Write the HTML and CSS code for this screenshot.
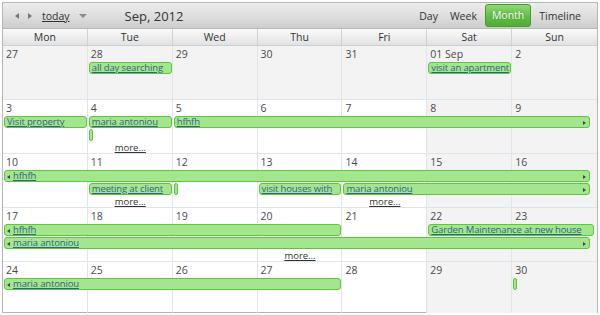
FILE: index.html
```html
<!DOCTYPE html>
<html lang="en">
<head>
  <meta charset="UTF-8">
  <title>Scheduler - Month</title>
  <link rel="stylesheet" href="styles.css">
</head>
<body>
  <div class="scheduler">
    <div class="toolbar">
      <div class="nav">
        <span class="arrow prev"></span>
        <span class="arrow next"></span>
        <a class="today" href="#">today</a>
        <span class="drop"></span>
        <span class="title">Sep, 2012</span>
      </div>
      <div class="views">
        <span class="view">Day</span>
        <span class="view">Week</span>
        <span class="view active">Month</span>
        <span class="view">Timeline</span>
      </div>
    </div>

    <div class="dayheads">
      <div>Mon</div><div>Tue</div><div>Wed</div><div>Thu</div><div>Fri</div><div>Sat</div><div>Sun</div>
    </div>

    <div class="weeks">
      <!-- week 1 -->
      <div class="week">
        <div class="day off">27</div>
        <div class="day off">28</div>
        <div class="day off">29</div>
        <div class="day off">30</div>
        <div class="day off">31</div>
        <div class="day off">01 Sep</div>
        <div class="day off">2</div>
        <a class="event r1 c2">all day searching</a>
        <a class="event r1 c6">visit an apartment</a>
      </div>

      <!-- week 2 -->
      <div class="week">
        <div class="day">3</div>
        <div class="day">4</div>
        <div class="day">5</div>
        <div class="day">6</div>
        <div class="day">7</div>
        <div class="day off">8</div>
        <div class="day off">9</div>
        <a class="event r1 c1">Visit property</a>
        <a class="event r1 c2">maria antoniou</a>
        <a class="event r1 c3 w5 to-next">hfhfh</a>
        <a class="event stub r2 c2"></a>
        <a class="more c2">more...</a>
      </div>

      <!-- week 3 -->
      <div class="week">
        <div class="day">10</div>
        <div class="day">11</div>
        <div class="day">12</div>
        <div class="day">13</div>
        <div class="day">14</div>
        <div class="day off">15</div>
        <div class="day off">16</div>
        <a class="event r1 c1 w7 from-prev to-next">hfhfh</a>
        <a class="event r2 c2">meeting at client</a>
        <a class="event stub r2 c3"></a>
        <a class="event r2 c4">visit houses with</a>
        <a class="event r2 c5 w3 to-next">maria antoniou</a>
        <a class="more c2">more...</a>
        <a class="more c5">more...</a>
      </div>

      <!-- week 4 -->
      <div class="week">
        <div class="day">17</div>
        <div class="day">18</div>
        <div class="day">19</div>
        <div class="day">20</div>
        <div class="day">21</div>
        <div class="day off">22</div>
        <div class="day off">23</div>
        <a class="event r1 c1 w4 from-prev">hfhfh</a>
        <a class="event r1 c6 w2 wide">Garden Maintenance at new house</a>
        <a class="event r2 c1 w7 from-prev to-next">maria antoniou</a>
        <a class="more c4">more...</a>
      </div>

      <!-- week 5 -->
      <div class="week">
        <div class="day">24</div>
        <div class="day">25</div>
        <div class="day">26</div>
        <div class="day">27</div>
        <div class="day">28</div>
        <div class="day off">29</div>
        <div class="day off">30</div>
        <a class="event r1 c1 w4 from-prev">maria antoniou</a>
        <a class="event stub r1 c7"></a>
      </div>
    </div>
  </div>
</body>
</html>
```

FILE: styles.css
```css
body {
  margin: 0;
  font-family: "Open Sans", "Segoe UI", sans-serif;
  color: #333;
}
.scheduler {
  margin: 2px 0 0 2px;
  width: 596px;
  height: 311px;
  box-sizing: border-box;
  border: 1px solid #b5b5b5;
  display: flex;
  flex-direction: column;
  background: #fff;
}

/* toolbar */
.toolbar {
  height: 25px;
  flex: none;
  display: flex;
  align-items: center;
  justify-content: space-between;
  background: linear-gradient(#ececec, #e0e0e0 45%, #cdcdcd);
  border-bottom: 1px solid #b8b8b8;
}
.nav {
  display: flex;
  align-items: center;
  padding-left: 12px;
  font-size: 10.5px;
}
.arrow {
  width: 0;
  height: 0;
  border-top: 3px solid transparent;
  border-bottom: 3px solid transparent;
  margin-right: 9px;
}
.arrow.prev {
  border-right: 4px solid #777;
}
.arrow.next {
  border-left: 4px solid #777;
}
.today {
  color: #333;
  text-decoration: underline;
  margin-left: 1px;
}
.drop {
  width: 0;
  height: 0;
  border-left: 4px solid transparent;
  border-right: 4px solid transparent;
  border-top: 4px solid #8a8a8a;
  margin: 1px 0 0 9px;
}
.title {
  font-size: 13px;
  margin-left: 38px;
  color: #333;
}
.views {
  display: flex;
  align-items: center;
  padding-right: 10px;
  font-size: 10.5px;
}
.view {
  padding: 3px 6px;
  color: #333;
}
.view.active {
  color: #fff;
  margin: 0 2px;
  padding: 3px 6px 4px;
  border: 1px solid #4a9a32;
  border-radius: 3px;
  background: linear-gradient(#8fd877, #62bd45 55%, #4fae33);
  text-shadow: 0 0 2px #3f8a28;
}

/* day names */
.dayheads {
  flex: none;
  display: grid;
  grid-template-columns: repeat(7, 1fr);
  height: 16px;
  border-bottom: 1px solid #c9cfd6;
  background: linear-gradient(#fbfbfb, #ececec 60%, #e2e2e2);
  font-size: 10.5px;
  line-height: 16px;
  text-align: center;
}
.dayheads div {
  border-right: 1px solid #d2d2d2;
}
.dayheads div:last-child {
  border-right: none;
}

/* month grid */
.weeks {
  flex: 1;
  display: grid;
  grid-template-rows: repeat(5, 1fr);
}
.week {
  display: grid;
  grid-template-columns: repeat(7, 1fr);
  grid-template-rows: 15px 13px 13px 12px 1fr;
  border-bottom: 1px solid #dfe5ec;
  min-height: 0;
}
.week:last-child {
  border-bottom: none;
}
.day {
  grid-row: 1 / -1;
  border-right: 1px solid #dfe5ec;
  padding: 2px 0 0 3px;
  font-size: 10.5px;
  line-height: 13px;
  color: #4a4a4a;
}
.day:nth-child(1) { grid-column: 1; }
.day:nth-child(2) { grid-column: 2; }
.day:nth-child(3) { grid-column: 3; }
.day:nth-child(4) { grid-column: 4; }
.day:nth-child(5) { grid-column: 5; }
.day:nth-child(6) { grid-column: 6; }
.day:nth-child(7) { grid-column: 7; border-right: none; }
.day.off {
  background: #f3f3f3;
}

/* events */
.event {
  display: block;
  height: 12px;
  margin: 1px 1px 0 1px;
  box-sizing: border-box;
  border: 1px solid #5cc63c;
  border-radius: 3px;
  background: #a3e68e;
  color: #34608c;
  font-size: 9.5px;
  line-height: 10px;
  letter-spacing: -0.15px;
  padding-left: 2px;
  white-space: nowrap;
  overflow: hidden;
  text-decoration: underline;
  position: relative;
}
.event.stub {
  width: 4px;
  padding: 0;
  border-radius: 2px;
}
.event.from-prev {
  padding-left: 8px;
}
.event.from-prev::before {
  content: "";
  position: absolute;
  left: 2px;
  top: 4px;
  border-top: 2px solid transparent;
  border-bottom: 2px solid transparent;
  border-right: 3px solid #444;
}
.event.to-next {
  margin-right: 7px;
}
.event.to-next::after {
  content: "";
  position: absolute;
  right: 3px;
  top: 4px;
  border-top: 2px solid transparent;
  border-bottom: 2px solid transparent;
  border-left: 3px solid #444;
}
.event.wide {
  margin-right: 3px;
}
.r1 { grid-row: 2; }
.r2 { grid-row: 3; }
.c1 { grid-column-start: 1; }
.c2 { grid-column-start: 2; }
.c3 { grid-column-start: 3; }
.c4 { grid-column-start: 4; }
.c5 { grid-column-start: 5; }
.c6 { grid-column-start: 6; }
.c7 { grid-column-start: 7; }
.w2 { grid-column-end: span 2; }
.w3 { grid-column-end: span 3; }
.w4 { grid-column-end: span 4; }
.w5 { grid-column-end: span 5; }
.w7 { grid-column-end: span 7; }

.more {
  grid-row: 4;
  justify-self: center;
  align-self: end;
  font-size: 9.5px;
  line-height: 10px;
  color: #333;
  text-decoration: underline;
}
```
